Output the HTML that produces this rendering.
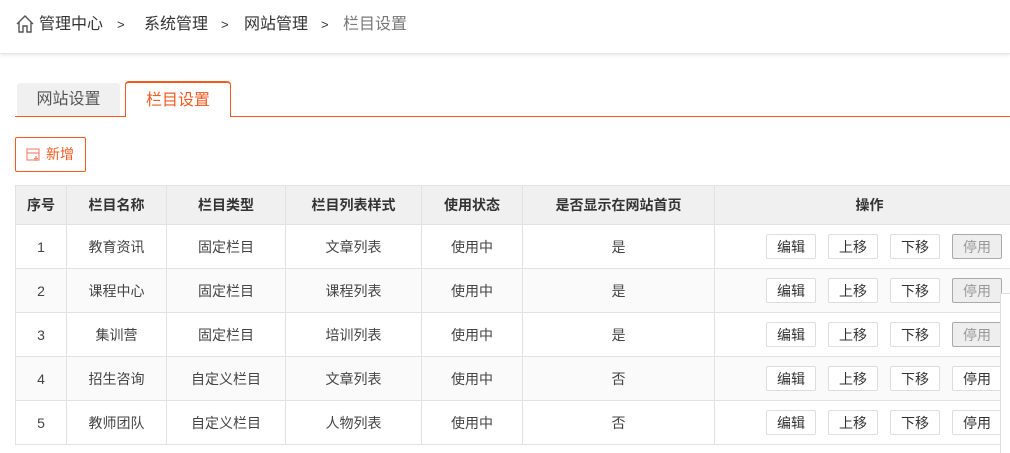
<!DOCTYPE html>
<html><head><meta charset="utf-8"><style>
*{box-sizing:border-box;margin:0;padding:0}
body{width:1010px;height:448px;overflow:hidden;background:#fff;font-family:"Liberation Sans","Noto Sans CJK SC",sans-serif;font-size:14px;color:#333;position:relative}
.top{position:absolute;left:0;top:0;width:1010px;height:54px;border-bottom:1px solid #e4e4e4;box-shadow:0 2px 3px #eee}
.crumb{position:absolute;top:13px;height:24px;line-height:24px;font-size:16px;color:#333}
.gt{font-size:13px}
.tab{position:absolute;top:83px;height:33px;line-height:33px;text-align:center;font-size:16px}
.t1{left:17px;width:103px;background:#f0f0f0;color:#555;border-radius:3px 3px 0 0}
.t2{left:125px;width:106px;top:81px;height:36px;line-height:36px;border:1px solid #f25a22;border-bottom:none;border-top-width:2px;color:#f25a22;background:#fff;border-radius:4px 4px 0 0;z-index:2}
.line{position:absolute;left:15px;top:116px;width:995px;height:1px;background:#f25a22}
.add{position:absolute;left:15px;top:137px;width:71px;height:35px;border:1px solid #f25a22;border-radius:2px;color:#f25a22;font-size:14px;line-height:33px;padding-left:30px}
table{position:absolute;left:15px;top:185px;border-collapse:collapse;width:1010px;table-layout:fixed}
td,th{border:1px solid #e2e2e2;text-align:center;height:44px;font-size:14px;color:#444}
th{height:39px;background:#f0f0f0;font-weight:bold;color:#333}
tr.alt td{background:#fafafa}
.ops{text-align:left}
.ops div{display:flex;gap:12px;margin-left:51px}
.b{display:block;width:50px;height:25px;line-height:25px;text-align:center;border:1px solid #ddd;border-radius:2px;background:#fff;font-size:14px;color:#333}
.d{background:#eee;border-color:#aaa;color:#999}
.panel{position:absolute;left:1000px;top:293px;width:20px;height:160px;background:#fff;border-left:1px solid #ddd;border-top:1px solid #ddd;z-index:5}
</style></head><body>
<div class="top">
<svg style="position:absolute;left:15px;top:14px" width="20" height="20" viewBox="0 0 20 20" fill="none" stroke="#555" stroke-width="1.4"><path d="M2 10 L10 2 L18 10 M4 8 V18 H8 V12 H12 V18 H16 V8"/></svg>
<span class="crumb" style="left:39px">管理中心</span>
<span class="crumb gt" style="left:117px">&gt;</span>
<span class="crumb" style="left:144px">系统管理</span>
<span class="crumb gt" style="left:221px">&gt;</span>
<span class="crumb" style="left:244px">网站管理</span>
<span class="crumb gt" style="left:321px">&gt;</span>
<span class="crumb" style="left:343px;color:#777">栏目设置</span>
</div>
<div class="tab t1">网站设置</div>
<div class="tab t2">栏目设置</div>
<div class="line"></div>
<div class="add"><svg style="position:absolute;left:10px;top:10px" width="15" height="14" viewBox="0 0 15 14" fill="none" stroke="#f58a7a" stroke-width="1.2"><rect x="1" y="1" width="12" height="11"/><path d="M1 5 H13 M10 8 V13 M8 10.5 H12"/></svg>新增</div>
<table>
<colgroup><col style="width:51px"><col style="width:100px"><col style="width:119px"><col style="width:136px"><col style="width:101px"><col style="width:192px"><col></colgroup>
<tr><th>序号</th><th>栏目名称</th><th>栏目类型</th><th>栏目列表样式</th><th>使用状态</th><th>是否显示在网站首页</th><th>操作</th></tr>
<tr><td>1</td><td>教育资讯</td><td>固定栏目</td><td>文章列表</td><td>使用中</td><td>是</td><td class="ops"><div><span class="b">编辑</span><span class="b">上移</span><span class="b">下移</span><span class="b d">停用</span></div></td></tr>
<tr class="alt"><td>2</td><td>课程中心</td><td>固定栏目</td><td>课程列表</td><td>使用中</td><td>是</td><td class="ops"><div><span class="b">编辑</span><span class="b">上移</span><span class="b">下移</span><span class="b d">停用</span></div></td></tr>
<tr><td>3</td><td>集训营</td><td>固定栏目</td><td>培训列表</td><td>使用中</td><td>是</td><td class="ops"><div><span class="b">编辑</span><span class="b">上移</span><span class="b">下移</span><span class="b d">停用</span></div></td></tr>
<tr class="alt"><td>4</td><td>招生咨询</td><td>自定义栏目</td><td>文章列表</td><td>使用中</td><td>否</td><td class="ops"><div><span class="b">编辑</span><span class="b">上移</span><span class="b">下移</span><span class="b">停用</span></div></td></tr>
<tr><td>5</td><td>教师团队</td><td>自定义栏目</td><td>人物列表</td><td>使用中</td><td>否</td><td class="ops"><div><span class="b">编辑</span><span class="b">上移</span><span class="b">下移</span><span class="b">停用</span></div></td></tr>
</table>
<div class="panel"></div>
</body></html>
